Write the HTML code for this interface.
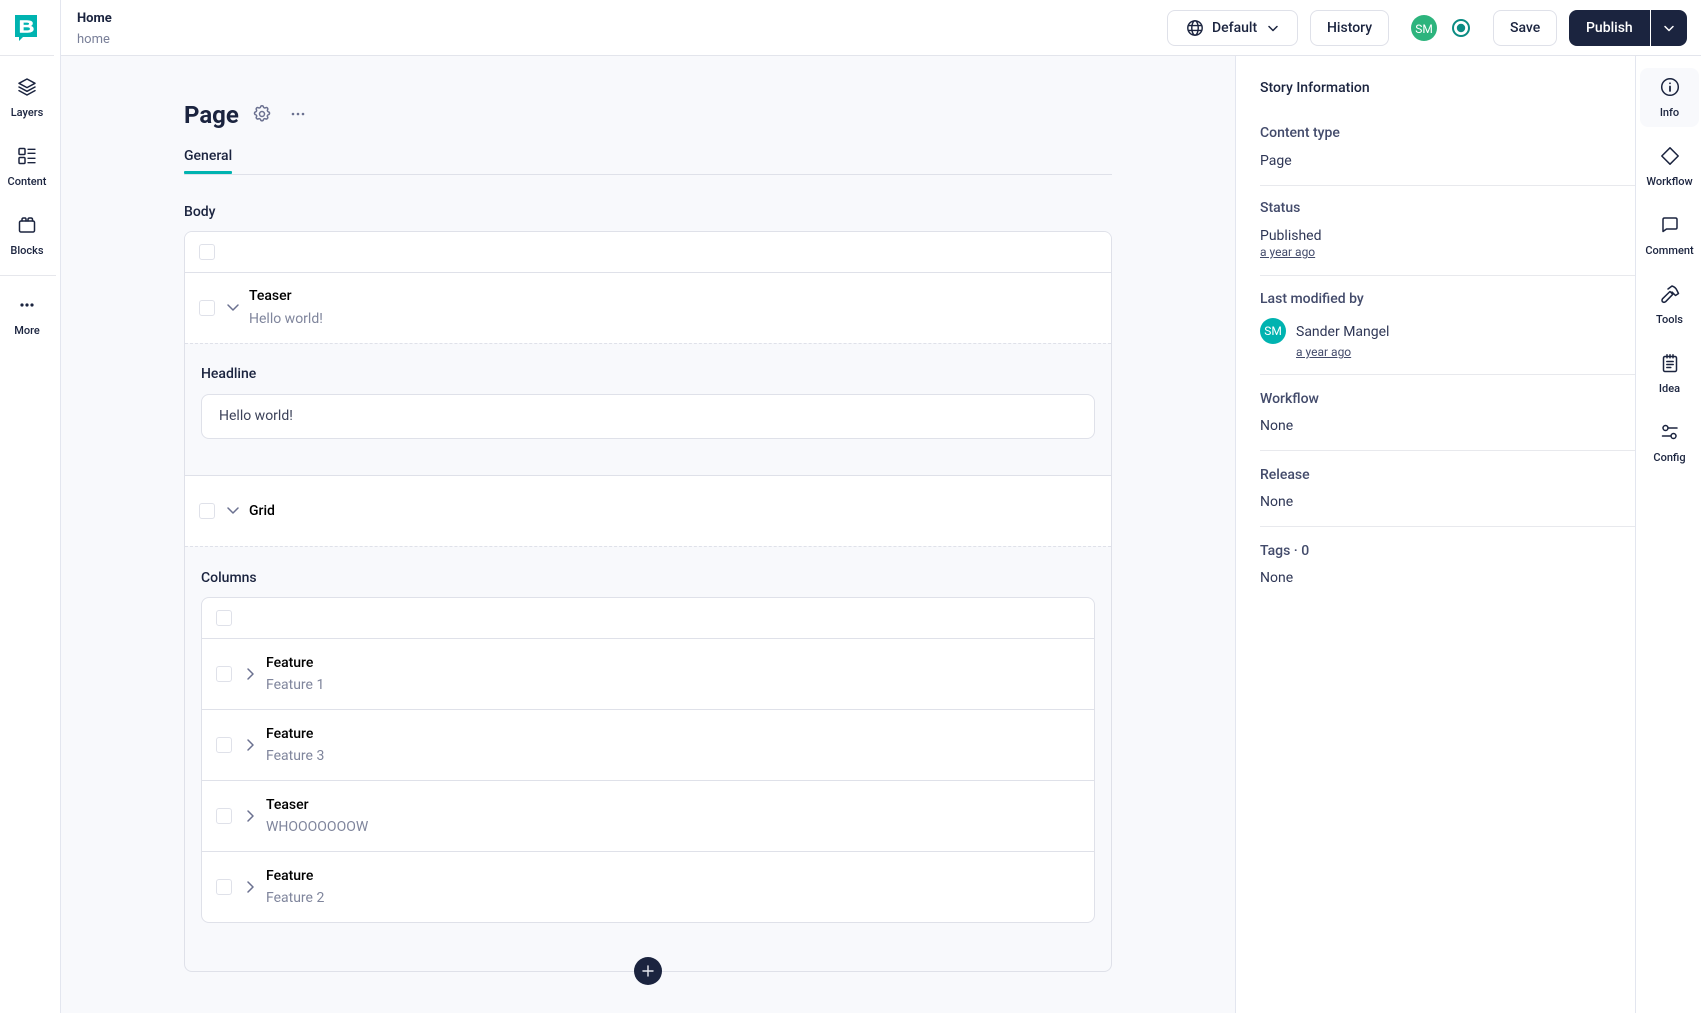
<!DOCTYPE html>
<html lang="en"><head><meta charset="utf-8"><title>Home</title>
<style>
*{box-sizing:border-box}
html,body{margin:0;padding:0;width:1701px;height:1013px;overflow:hidden;background:#fff;font-family:Roboto,"Liberation Sans",sans-serif;color:#1b243f}
.a,.t{position:absolute}
.t{white-space:nowrap;line-height:20px;height:20px;font-size:14px;margin-top:1px}
.m{font-weight:500}
.c{transform:translateX(-50%);text-align:center}
.rl{font-size:11px;font-weight:500}
.g{color:#7f859c}
.s{color:#434b6b}
.u{font-size:12px;text-decoration:underline;color:#434b6b}
.k{position:absolute;width:16px;height:16px;border:1px solid #dfe1e9;border-radius:3px;background:#fff}
.l{position:absolute;height:1px;background:#dfe1e9}
.b{font-weight:500;color:#000}
.btn{position:absolute;top:10px;height:36px;border:1px solid #dfe1e9;border-radius:8px;background:#fff}
svg{position:absolute;overflow:visible;fill:none;stroke-linecap:round;stroke-linejoin:round}
.i{stroke:#1b243f;stroke-width:1.5;width:20px;height:20px}
.ch{stroke:#6b7190;stroke-width:1.5;width:14px;height:14px}
</style></head><body>

<!-- main bg -->
<div class="a" style="left:60px;top:56px;width:1175px;height:957px;background:#f8f9fc"></div>
<!-- borders -->
<div class="a" style="left:60px;top:0;width:1px;height:1013px;background:#e3e6ef"></div>
<div class="l" style="left:0;top:55px;width:54px;background:#e6e7ec"></div>
<div class="l" style="left:61px;top:55px;width:1640px;background:#e3e5ec"></div>
<div class="l" style="left:0;top:275px;width:56px;background:#e6e7ec"></div>
<div class="a" style="left:1235px;top:56px;width:1px;height:957px;background:#e3e6ef"></div>
<div class="a" style="left:1635px;top:56px;width:1px;height:957px;background:#e3e6ef"></div>

<!-- logo -->
<svg style="left:0;top:0;width:60px;height:55px"><path d="M15 15h22v22H23l-4 4v-4h-4z" fill="#00b3b0"/><text x="0" y="0" transform="translate(18.700 32.500) scale(1.2 1)" font-family="Liberation Sans" font-weight="700" font-size="18" fill="#fff" stroke="#fff" stroke-width=".5">B</text></svg>

<!-- left rail -->
<svg class="i" viewBox="0 0 20 20" style="left:17px;top:77px"><path d="M10 2 18 6.300 10 10.600 2 6.300z"/><path d="M2 10 10 14.300 18 10"/><path d="M2 13.600 10 18 18 13.600"/></svg>
<div class="t rl c" style="left:27px;top:102px">Layers</div>
<svg class="i" viewBox="0 0 20 20" style="left:17px;top:146px"><rect x="2" y="2.500" width="6" height="6" rx="1"/><rect x="2" y="11.500" width="6" height="6" rx="1"/><path d="M11 3.300h7M11 7.300h7M11 12.300h7M11 16.700h7" stroke-width="1.300"/></svg>
<div class="t rl c" style="left:27px;top:171px">Content</div>
<svg class="i" viewBox="0 0 20 20" style="left:17px;top:215px"><rect x="2.500" y="6" width="15" height="11" rx="1.500"/><path d="M5 6V4.500q0-1.500 1.500-1.500H8q1 0 1 1.500V6M11 6V4.500Q11 3 12.500 3H14q1.500 0 1.500 1.500V6"/></svg>
<div class="t rl c" style="left:27px;top:240px">Blocks</div>
<svg viewBox="0 0 20 6" style="left:17px;top:302px;width:20px;height:6px"><circle cx="5" cy="3" r="1.600" fill="#1b243f"/><circle cx="10" cy="3" r="1.600" fill="#1b243f"/><circle cx="15" cy="3" r="1.600" fill="#1b243f"/></svg>
<div class="t rl c" style="left:27px;top:320px">More</div>

<!-- header -->
<div class="t" style="left:77px;top:8px;font-size:13px;font-weight:700">Home</div>
<div class="t" style="left:77px;top:29px;font-size:13px;color:#7a8099">home</div>

<div class="btn" style="left:1167px;width:131px"></div>
<svg class="i" viewBox="0 0 20 20" style="left:1186px;top:19px;width:18px;height:18px;stroke-width:1.600"><circle cx="10" cy="10" r="8"/><ellipse cx="10" cy="10" rx="3.600" ry="8"/><path d="M2.500 7.300h15M2.500 12.700h15"/></svg>
<div class="t m" style="left:1212px;top:17px">Default</div>
<svg class="ch" viewBox="0 0 14 14" style="left:1266px;top:21px;stroke:#1b243f"><path d="M3 5.500 7 9.500 11 5.500"/></svg>
<div class="btn" style="left:1310px;width:79px"></div>
<div class="t m" style="left:1327px;top:17px">History</div>
<div class="a" style="left:1411px;top:15px;width:26px;height:26px;border-radius:50%;background:#2db47d"></div>
<div class="t c" style="left:1424px;top:18px;font-size:12px;color:#fff">SM</div>
<svg viewBox="0 0 20 20" style="left:1451px;top:18px;width:20px;height:20px"><circle cx="10" cy="10" r="8" stroke="#0b8c83" stroke-width="2"/><circle cx="10" cy="10" r="4.200" fill="#0b8c83"/></svg>
<div class="btn" style="left:1493px;width:64px"></div>
<div class="t m" style="left:1510px;top:17px">Save</div>
<div class="a" style="left:1569px;top:10px;width:81px;height:36px;background:#1b243f;border-radius:8px 0 0 8px"></div>
<div class="a" style="left:1651px;top:10px;width:36px;height:36px;background:#1b243f;border-radius:0 8px 8px 0"></div>
<div class="t m" style="left:1586px;top:17px;color:#fff">Publish</div>
<svg class="ch" viewBox="0 0 14 14" style="left:1662px;top:21px;stroke:#fff"><path d="M3 5.500 7 9.500 11 5.500"/></svg>

<!-- title -->
<div class="t" style="left:184px;top:104px;font-size:24px;font-weight:700">Page</div>
<svg viewBox="0 0 24 24" style="left:252px;top:104px;width:20px;height:20px;stroke:#6b7190;stroke-width:1.800"><path d="M10.300 3.400c.4-1.800 3-1.800 3.400 0a1.700 1.700 0 0 0 2.600 1.100c1.500-.9 3.300.8 2.400 2.400a1.700 1.700 0 0 0 1 2.500c1.800.4 1.800 3 0 3.400a1.700 1.700 0 0 0-1 2.600c.9 1.500-.9 3.300-2.400 2.400a1.700 1.700 0 0 0-2.600 1c-.4 1.800-3 1.800-3.400 0a1.700 1.700 0 0 0-2.600-1c-1.500.9-3.300-.9-2.400-2.400a1.700 1.700 0 0 0-1-2.600c-1.800-.4-1.800-3 0-3.400a1.700 1.700 0 0 0 1-2.500c-.9-1.600.9-3.300 2.400-2.400a1.700 1.700 0 0 0 2.600-1.100z"/><circle cx="12" cy="12" r="3"/></svg>
<svg viewBox="0 0 16 4" style="left:290px;top:112px;width:16px;height:4px"><circle cx="3" cy="2" r="1.300" fill="#6b7190"/><circle cx="8" cy="2" r="1.300" fill="#6b7190"/><circle cx="13" cy="2" r="1.300" fill="#6b7190"/></svg>
<div class="t m" style="left:184px;top:145px">General</div>
<div class="l" style="left:184px;top:174px;width:928px"></div>
<div class="a" style="left:184px;top:171px;width:48px;height:3px;background:#00b3b0;border-radius:1px"></div>
<div class="t m" style="left:184px;top:201px">Body</div>

<!-- outer box -->
<div class="a" style="left:184px;top:231px;width:928px;height:741px;border:1px solid #dfe1e9;border-radius:8px;background:#f8f9fc"></div>
<div class="a" style="left:185px;top:232px;width:926px;height:111px;background:#fff;border-radius:7px 7px 0 0"></div>
<div class="l" style="left:185px;top:272px;width:926px"></div>
<div class="k" style="left:199px;top:244px"></div>
<div class="k" style="left:199px;top:300px"></div>
<svg class="ch" viewBox="0 0 14 14" style="left:226px;top:300px"><path d="M2 5 7 10 12 5"/></svg>
<div class="t b" style="left:249px;top:285px">Teaser</div>
<div class="t g" style="left:249px;top:308px">Hello world!</div>
<div class="a" style="left:185px;top:343px;width:926px;border-top:1px dashed #dfe1e9"></div>

<div class="t m" style="left:201px;top:363px">Headline</div>
<div class="a" style="left:201px;top:394px;width:894px;height:45px;border:1px solid #dfe1e9;border-radius:8px;background:#fff"></div>
<div class="t" style="left:219px;top:405px;color:#3c4259">Hello world!</div>

<div class="a" style="left:185px;top:475px;width:926px;height:71px;background:#fff;border-top:1px solid #dfe1e9"></div>
<div class="k" style="left:199px;top:503px"></div>
<svg class="ch" viewBox="0 0 14 14" style="left:226px;top:503px"><path d="M2 5 7 10 12 5"/></svg>
<div class="t b" style="left:249px;top:500px">Grid</div>
<div class="a" style="left:185px;top:546px;width:926px;border-top:1px dashed #dfe1e9"></div>

<div class="t m" style="left:201px;top:567px">Columns</div>
<div class="a" style="left:201px;top:597px;width:894px;height:326px;border:1px solid #dfe1e9;border-radius:8px;background:#fff"></div>
<div class="k" style="left:216px;top:610px"></div>
<div class="l" style="left:202px;top:638px;width:892px"></div>
<div class="k" style="left:216px;top:666px"></div>
<svg class="ch" viewBox="0 0 14 14" style="left:242.500px;top:667px"><path d="M5 2 10 7 5 12"/></svg>
<div class="t b" style="left:266px;top:652px">Feature</div>
<div class="t g" style="left:266px;top:674px">Feature 1</div>
<div class="l" style="left:202px;top:709px;width:892px"></div>
<div class="k" style="left:216px;top:737px"></div>
<svg class="ch" viewBox="0 0 14 14" style="left:242.500px;top:738px"><path d="M5 2 10 7 5 12"/></svg>
<div class="t b" style="left:266px;top:723px">Feature</div>
<div class="t g" style="left:266px;top:745px">Feature 3</div>
<div class="l" style="left:202px;top:780px;width:892px"></div>
<div class="k" style="left:216px;top:808px"></div>
<svg class="ch" viewBox="0 0 14 14" style="left:242.500px;top:809px"><path d="M5 2 10 7 5 12"/></svg>
<div class="t b" style="left:266px;top:794px">Teaser</div>
<div class="t g" style="left:266px;top:816px">WHOOOOOOOW</div>
<div class="l" style="left:202px;top:851px;width:892px"></div>
<div class="k" style="left:216px;top:879px"></div>
<svg class="ch" viewBox="0 0 14 14" style="left:242.500px;top:880px"><path d="M5 2 10 7 5 12"/></svg>
<div class="t b" style="left:266px;top:865px">Feature</div>
<div class="t g" style="left:266px;top:887px">Feature 2</div>

<div class="a" style="left:634px;top:957px;width:28px;height:28px;border-radius:50%;background:#1b243f"></div>
<svg viewBox="0 0 12 12" style="left:642px;top:965px;width:12px;height:12px;stroke:#e6e8ef;stroke-width:1.400"><path d="M6 1v10M1 6h10"/></svg>

<!-- info panel -->
<div class="t m" style="left:1260px;top:77px">Story Information</div>
<div class="t m s" style="left:1260px;top:122px">Content type</div>
<div class="t" style="left:1260px;top:150px;color:#2f3756">Page</div>
<div class="l" style="left:1260px;top:185px;width:375px;background:#e8e9ed"></div>
<div class="t m s" style="left:1260px;top:197px">Status</div>
<div class="t" style="left:1260px;top:225px;color:#2f3756">Published</div>
<div class="t u" style="left:1260px;top:241px">a year ago</div>
<div class="l" style="left:1260px;top:275px;width:375px;background:#e8e9ed"></div>
<div class="t m s" style="left:1260px;top:288px">Last modified by</div>
<div class="a" style="left:1260px;top:318px;width:26px;height:26px;border-radius:50%;background:#00b3b0"></div>
<div class="t c" style="left:1273px;top:320px;font-size:12px;color:#fff">SM</div>
<div class="t" style="left:1296px;top:321px;color:#2f3756">Sander Mangel</div>
<div class="t u" style="left:1296px;top:341px">a year ago</div>
<div class="l" style="left:1260px;top:374px;width:375px;background:#e8e9ed"></div>
<div class="t m s" style="left:1260px;top:388px">Workflow</div>
<div class="t" style="left:1260px;top:415px;color:#2f3756">None</div>
<div class="l" style="left:1260px;top:450px;width:375px;background:#e8e9ed"></div>
<div class="t m s" style="left:1260px;top:464px">Release</div>
<div class="t" style="left:1260px;top:491px;color:#2f3756">None</div>
<div class="l" style="left:1260px;top:526px;width:375px;background:#e8e9ed"></div>
<div class="t m s" style="left:1260px;top:540px">Tags · 0</div>
<div class="t" style="left:1260px;top:567px;color:#2f3756">None</div>

<!-- right rail -->
<div class="a" style="left:1640px;top:68px;width:59px;height:59px;border-radius:8px;background:#f8f9fc"></div>
<svg class="i" viewBox="0 0 20 20" style="left:1660px;top:77px"><circle cx="10" cy="10" r="8.300"/><path d="M10 9.500v4.500" stroke-width="1.800"/><circle cx="10" cy="6.300" r=".9" fill="#1b243f" stroke="none"/></svg>
<div class="t rl c" style="left:1669.500px;top:102px">Info</div>
<svg class="i" viewBox="0 0 20 20" style="left:1660px;top:146px"><path d="M10 1.800 18.200 10 10 18.200 1.800 10z"/></svg>
<div class="t rl c" style="left:1669.500px;top:171px">Workflow</div>
<svg class="i" viewBox="0 0 20 20" style="left:1660px;top:215px"><path d="M3 16.500V4.500q0-1.500 1.500-1.500h11Q17 3 17 4.500v8q0 1.500-1.500 1.500H6.500z"/></svg>
<div class="t rl c" style="left:1669.500px;top:240px">Comment</div>
<svg class="i" viewBox="0 0 20 20" style="left:1660px;top:284px"><path d="M2.500 14.800 10 7.500l2.800 2.800-7.300 7.500q-1.500 1-3 0-1-1.500 0-3z"/><path d="M8 5 12 2q3.500 1 5 4.500l1.500 3-3 2L12 8"/></svg>
<div class="t rl c" style="left:1669.500px;top:309px">Tools</div>
<svg class="i" viewBox="0 0 20 20" style="left:1660px;top:353px"><rect x="3.500" y="3.500" width="13" height="15" rx="1.500"/><path d="M7 1.700v3M10 1.700v3M13 1.700v3M6.800 8.500h6.400M6.800 11.500h6.400M6.800 14.500h4"/></svg>
<div class="t rl c" style="left:1669.500px;top:378px">Idea</div>
<svg class="i" viewBox="0 0 20 20" style="left:1660px;top:422px"><circle cx="5.500" cy="6" r="2.500"/><circle cx="13.500" cy="14" r="2.500"/><path d="M8 6h9M2.500 14H11"/></svg>
<div class="t rl c" style="left:1669.500px;top:447px">Config</div>

</body></html>
